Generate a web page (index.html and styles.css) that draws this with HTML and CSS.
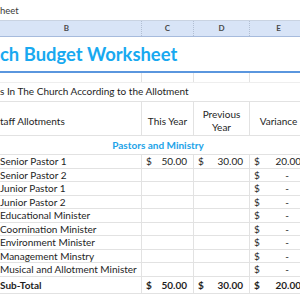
FILE: index.html
```html
<!DOCTYPE html>
<html>
<head>
<meta charset="utf-8">
<link rel="stylesheet" href="styles.css">
</head>
<body>
<div class="tabbar">heet</div>
<div class="viewport">
  <div class="sheet">
    <div class="row colhead">
      <div class="ch">B</div><div class="ch">C</div><div class="ch">D</div><div class="ch">E</div>
    </div>
    <div class="row title-row">
      <div class="title">ch Budget Worksheet</div>
    </div>
    <div class="row gap-row">
      <div class="cell"></div><div class="cell"></div><div class="cell"></div><div class="cell"></div>
    </div>
    <div class="row sub-row">
      <div class="subtitle">s In The Church According to the Allotment</div>
    </div>
    <div class="row head-row">
      <div class="cell hlabel">taff Allotments</div>
      <div class="cell hcenter">This Year</div>
      <div class="cell hcenter">Previous<br>Year</div>
      <div class="cell hcenter">Variance</div>
    </div>
    <div class="row section-row">
      <div class="section">Pastors and Ministry</div>
    </div>
    <div class="row data">
      <div class="cell label">Senior Pastor 1</div>
      <div class="cell num"><span>$</span><span class="v">50.00</span></div>
      <div class="cell num"><span>$</span><span class="v">30.00</span></div>
      <div class="cell num"><span>$</span><span class="v">20.00</span></div>
    </div>
    <div class="row data">
      <div class="cell label">Senior Pastor 2</div>
      <div class="cell num"></div><div class="cell num"></div>
      <div class="cell num"><span>$</span><span class="dash">-</span></div>
    </div>
    <div class="row data">
      <div class="cell label">Junior Pastor 1</div>
      <div class="cell num"></div><div class="cell num"></div>
      <div class="cell num"><span>$</span><span class="dash">-</span></div>
    </div>
    <div class="row data">
      <div class="cell label">Junior Pastor 2</div>
      <div class="cell num"></div><div class="cell num"></div>
      <div class="cell num"><span>$</span><span class="dash">-</span></div>
    </div>
    <div class="row data">
      <div class="cell label">Educational Minister</div>
      <div class="cell num"></div><div class="cell num"></div>
      <div class="cell num"><span>$</span><span class="dash">-</span></div>
    </div>
    <div class="row data">
      <div class="cell label">Coornination Minister</div>
      <div class="cell num"></div><div class="cell num"></div>
      <div class="cell num"><span>$</span><span class="dash">-</span></div>
    </div>
    <div class="row data">
      <div class="cell label">Environment Minister</div>
      <div class="cell num"></div><div class="cell num"></div>
      <div class="cell num"><span>$</span><span class="dash">-</span></div>
    </div>
    <div class="row data">
      <div class="cell label">Management Minstry</div>
      <div class="cell num"></div><div class="cell num"></div>
      <div class="cell num"><span>$</span><span class="dash">-</span></div>
    </div>
    <div class="row data">
      <div class="cell label">Musical and Allotment Minister</div>
      <div class="cell num"></div><div class="cell num"></div>
      <div class="cell num"><span>$</span><span class="dash">-</span></div>
    </div>
    <div class="row data total">
      <div class="cell label">Sub-Total</div>
      <div class="cell num"><span>$</span><span class="v">50.00</span></div>
      <div class="cell num"><span>$</span><span class="v">30.00</span></div>
      <div class="cell num"><span>$</span><span class="v">20.00</span></div>
    </div>
  </div>
</div>
</body>
</html>
```

FILE: styles.css
```css
html, body {
  margin: 0;
  padding: 0;
  background: #ffffff;
}
body {
  font-family: Lato, "Open Sans", sans-serif;
  color: #1e1e1e;
  width: 300px;
  height: 300px;
  overflow: hidden;
}
.tabbar {
  height: 21px;
  line-height: 21px;
  font-size: 9.5px;
  color: #3a3a3a;
  border-bottom: 1px solid #c9d3e2;
  box-sizing: border-box;
}
.viewport {
  width: 300px;
  overflow: hidden;
}
.sheet {
  margin-left: -8px;
  width: 316px;
}
.row {
  display: grid;
  grid-template-columns: 150px 52px 56px 58px;
  box-sizing: border-box;
  border-bottom: 1px solid #e2e2e2;
}
.colhead {
  height: 16px;
  background: #d8e4f7;
  border-bottom: 1px solid #a6bbdd;
}
.ch {
  font-size: 8px;
  font-weight: 700;
  color: #4a4a4a;
  text-align: center;
  line-height: 15px;
  border-right: 1px dotted #b2bfd3;
}
.title-row {
  height: 36px;
  border-bottom: 2px solid #5a96de;
}
.title {
  grid-column: 1 / -1;
  font-size: 18.4px;
  font-weight: 700;
  color: #18a9f0;
  padding-left: 8px;
  line-height: 34px;
  white-space: nowrap;
}
.gap-row {
  height: 10px;
  border-bottom: 1px solid #eeeeee;
}
.sub-row {
  height: 19px;
}
.subtitle {
  grid-column: 1 / -1;
  font-size: 10px;
  padding-left: 8px;
  line-height: 12px;
  align-self: end;
  padding-bottom: 4px;
  white-space: nowrap;
}
.cell {
  border-right: 1px solid #e2e2e2;
  overflow: hidden;
  white-space: nowrap;
  font-size: 10px;
}
.head-row {
  height: 34px;
}
.head-row .cell {
  display: flex;
  align-items: center;
  line-height: 13px;
  padding-top: 5px;
}
.hlabel {
  padding-left: 8px;
}
.hcenter {
  justify-content: center;
  text-align: center;
}
.section-row {
  height: 19px;
}
.section {
  grid-column: 1 / -1;
  text-align: center;
  padding-left: 16px;
  font-size: 10px;
  font-weight: 700;
  color: #1ca3e8;
  line-height: 18px;
}
.data {
  height: 13.5px;
}
.data .cell {
  line-height: 12.5px;
}
.label {
  text-indent: 8px;
}
.num {
  display: flex;
  justify-content: space-between;
  padding: 0 6px 0 4px;
}
.dash {
  padding-right: 12px;
}
.total {
  height: 17.5px;
  font-weight: 700;
}
.total .cell {
  line-height: 16.5px;
}
```
